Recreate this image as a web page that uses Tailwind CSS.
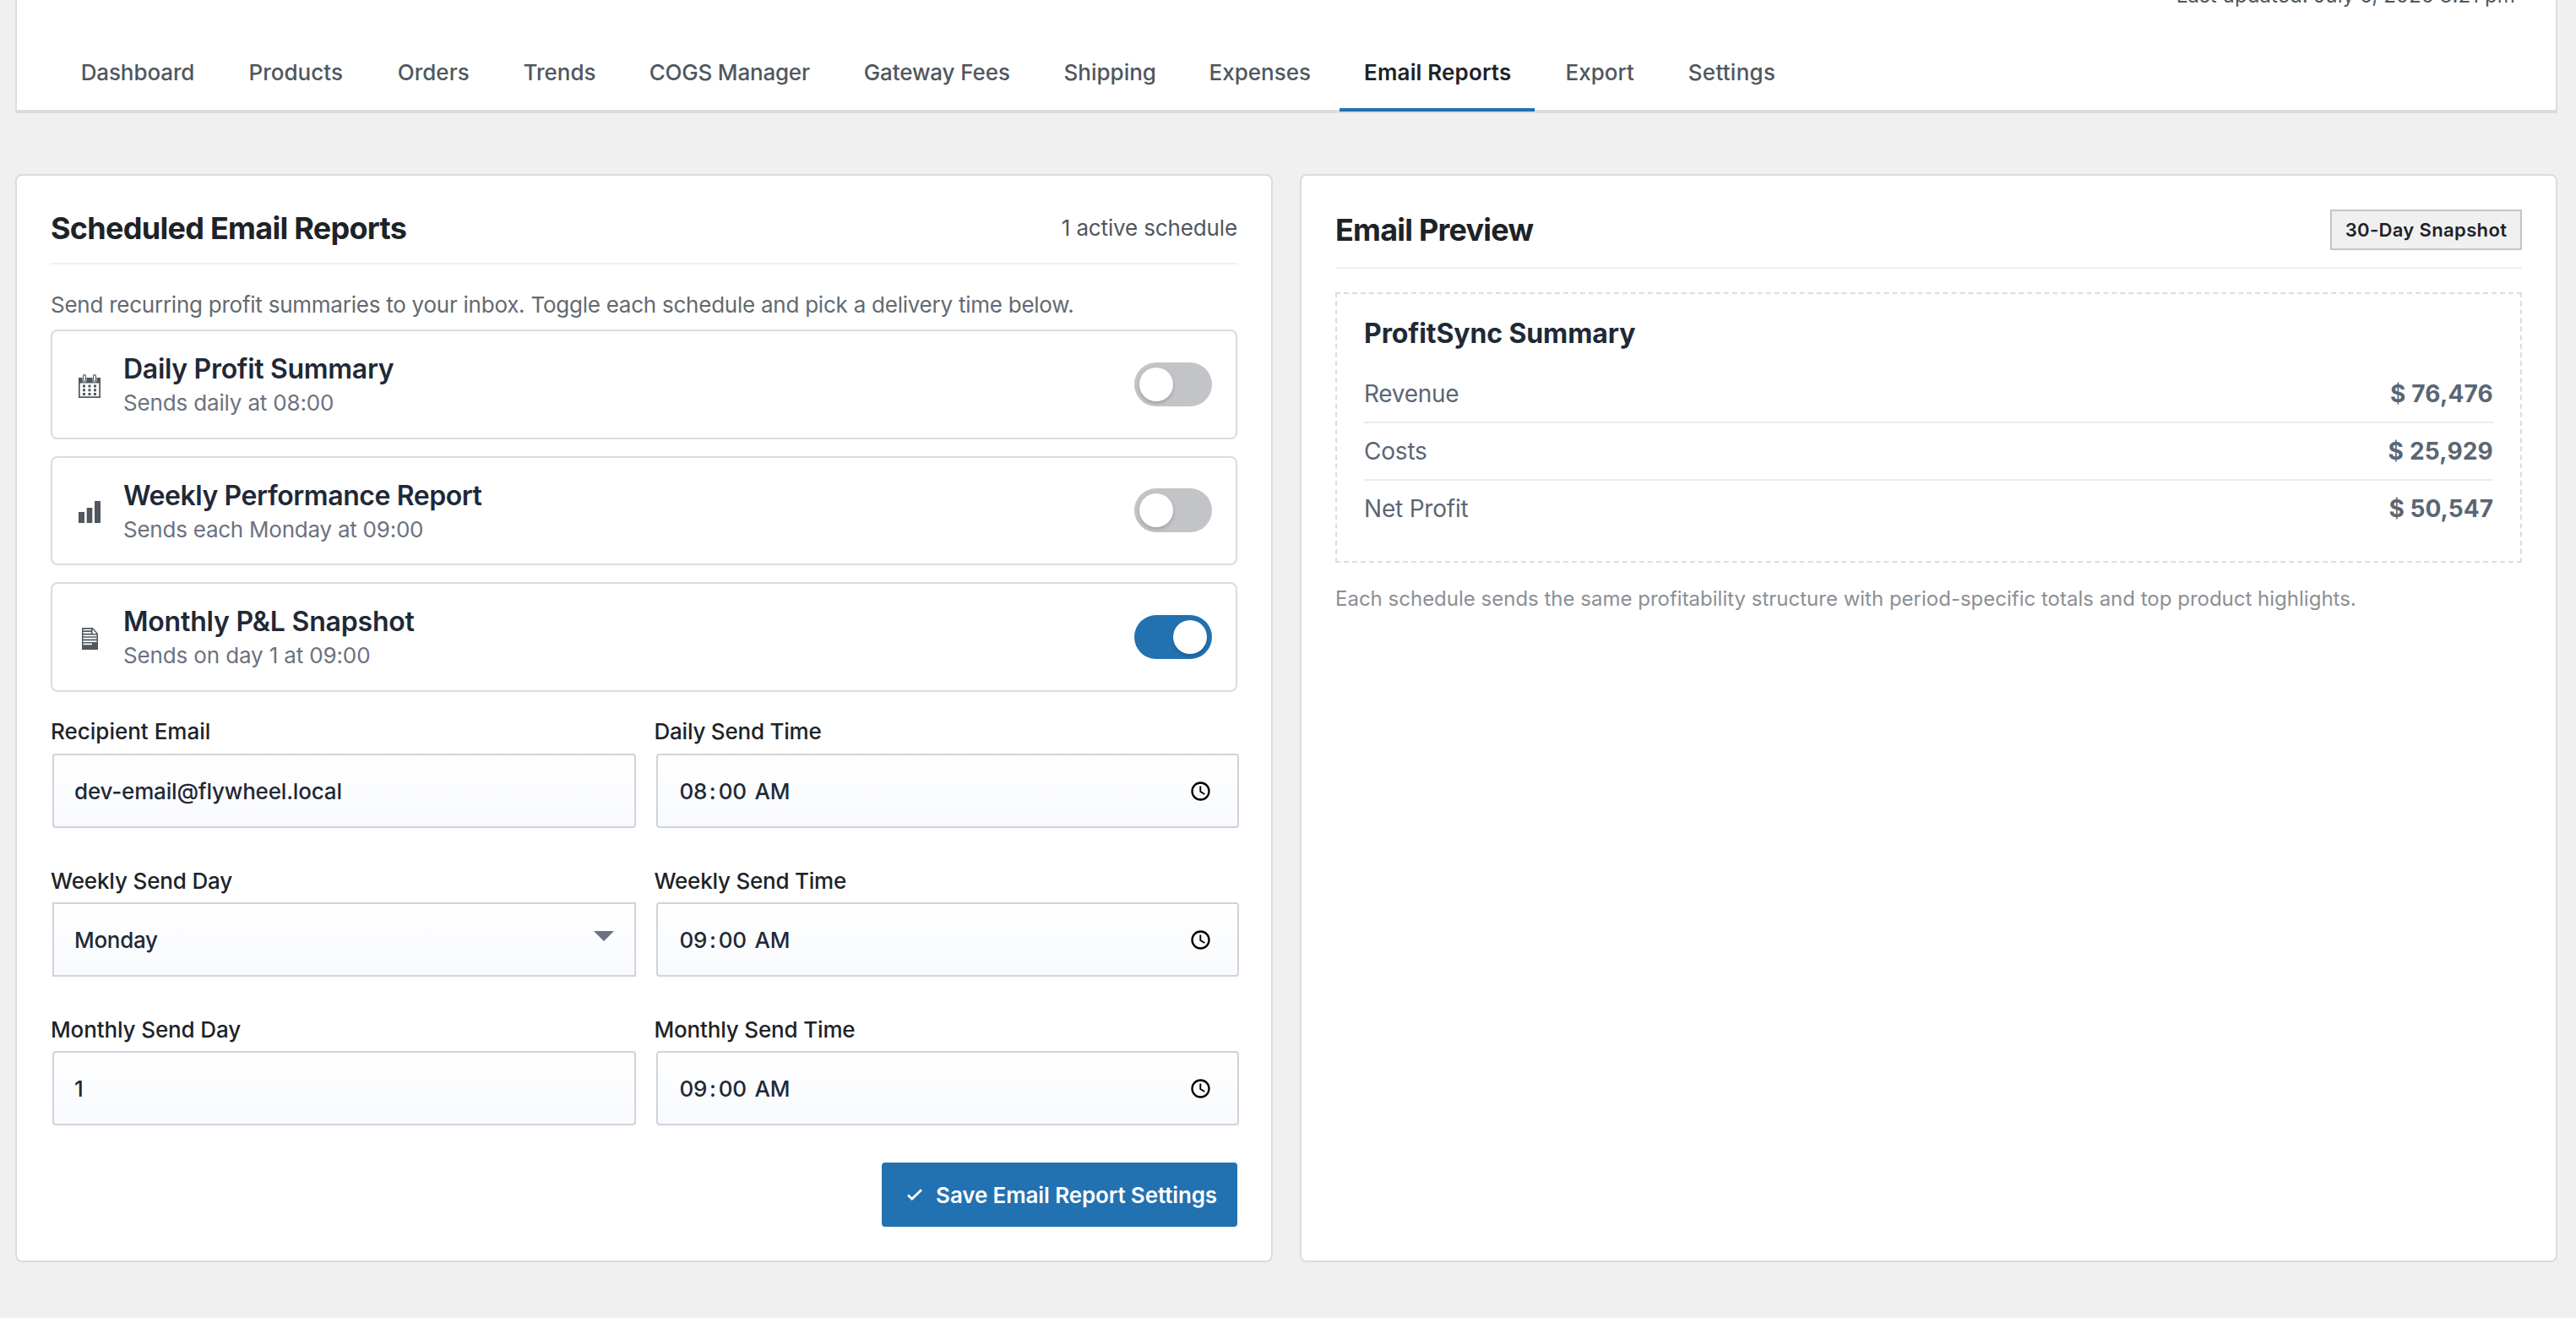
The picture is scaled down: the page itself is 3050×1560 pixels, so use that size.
<!DOCTYPE html>
<html lang="en">
<head>
<meta charset="utf-8">
<title>Email Reports</title>
<script src="https://cdn.jsdelivr.net/npm/@tailwindcss/browser@4"></script>
</head>
<body class="h-[1560px] w-[3050px] overflow-hidden bg-[#f0f0f0] px-0 font-['Inter',sans-serif] text-[26px] text-[#1d2327]">

<!-- Header with tabs -->
<header class="-mt-10 ml-[18px] h-[174px] w-[3010px] border-x-2 border-b-4 border-[#dcdcdc] bg-white pt-[17px]">
  <p class="pr-[48px] text-right text-2xl leading-9 tracking-[0.1px] text-[#50575e]">Last updated: July 6, 2026 3:21 pm</p>
  <nav class="mt-[30px] ml-[47px] flex gap-2 font-medium whitespace-nowrap text-[#50575e]">
    <a class="flex h-[89px] w-[190px] items-center justify-center border-b-4 border-transparent pl-[2px] tracking-[-0.1px]">Dashboard</a>
    <a class="flex h-[89px] w-[168.5px] items-center justify-center border-b-4 border-transparent pl-[2px]">Products</a>
    <a class="flex h-[89px] w-[142.5px] items-center justify-center border-b-4 border-transparent pl-px">Orders</a>
    <a class="flex h-[89px] w-[140px] items-center justify-center border-b-4 border-transparent pl-px">Trends</a>
    <a class="flex h-[89px] w-[245.5px] items-center justify-center border-b-4 border-transparent pl-[2px] tracking-[-0.2px]">COGS Manager</a>
    <a class="flex h-[89px] w-[229.5px] items-center justify-center border-b-4 border-transparent pl-[2px] tracking-[-0.1px]">Gateway Fees</a>
    <a class="flex h-[89px] w-[164.5px] items-center justify-center border-b-4 border-transparent pl-[2px]">Shipping</a>
    <a class="flex h-[89px] w-[174.5px] items-center justify-center border-b-4 border-transparent pl-[2px]">Expenses</a>
    <a class="relative z-10 flex h-[89px] w-[230.5px] items-center justify-center border-b-4 border-[#2271b1] pl-[2px] font-semibold tracking-[0.15px] text-[#1d2327]">Email Reports</a>
    <a class="flex h-[89px] w-[137.5px] items-center justify-center border-b-4 border-transparent pl-[2px]">Export</a>
    <a class="flex h-[89px] w-[158px] items-center justify-center border-b-4 border-transparent pl-[3px] tracking-[0.25px]">Settings</a>
  </nav>
</header>

<main class="mt-[72px] ml-[18px] grid h-[1288px] w-[3010px] grid-cols-2 gap-8">

  <!-- Schedules -->
  <section class="rounded-lg border-2 border-[#dcdcde] bg-white p-10">
    <div class="flex h-[65px] items-center justify-between border-b-2 border-[#f0f0f1] pb-5">
      <h2 class="text-4xl font-bold tracking-[-0.02em]">Scheduled Email Reports</h2>
      <span class="tracking-[-0.14px] text-[#50575e]">1 active schedule</span>
    </div>
    <p class="mt-7 leading-[39px] tracking-[-0.245px] text-[#646970]">Send recurring profit summaries to your inbox. Toggle each schedule and pick a delivery time below.</p>

    <div class="mt-[10px] flex flex-col gap-5">
      <div class="flex h-[129.5px] items-center rounded-lg border-2 border-[#dcdcde] px-7">
        <svg class="mt-1 size-8 shrink-0" viewBox="0 0 32 32" fill="#50575e">
          <path fill-rule="evenodd" d="M3 6h4.500v3a2.500 2.500 0 0 0 5 0V6h7v3a2.500 2.500 0 0 0 5 0V6H29v24H3zM4.700 12.500v15.800h22.600V12.500z"/>
          <path fill-rule="evenodd" d="M10 2a2 2 0 0 1 2 2v5a2 2 0 0 1-4 0V4a2 2 0 0 1 2-2zm0 1.200a.9.9 0 0 0-.9.9v4.800a.9.9 0 0 0 1.800 0V4.100a.9.9 0 0 0-.9-.9zM22 2a2 2 0 0 1 2 2v5a2 2 0 0 1-4 0V4a2 2 0 0 1 2-2zm0 1.200a.9.9 0 0 0-.9.9v4.800a.9.9 0 0 0 1.800 0V4.100a.9.9 0 0 0-.9-.9z"/>
          <path d="M8 14.500h3v3H8zM14.500 14.500h3v3h-3zM21 14.500h3v3h-3zM8 19.200h3v3H8zM14.500 19.200h3v3h-3zM21 19.200h3v3h-3zM8 24h3v3H8zM14.500 24h3v3h-3zM21 24h3v3h-3z"/>
        </svg>
        <div class="mt-[2px] ml-6">
          <h3 class="text-[32px] leading-[42px] font-semibold tracking-[-0.3px] text-[#1f2937]">Daily Profit Summary</h3>
          <p class="leading-[37px] tracking-[-0.16px] text-[#6b7280]">Sends daily at 08:00</p>
        </div>
        <div class="ml-auto flex h-[52px] w-[92px] items-center rounded-full bg-[#c3c4c7] px-1.5">
          <span class="size-10 rounded-full bg-white shadow-[0_2px_4px_rgba(0,0,0,0.2)]"></span>
        </div>
      </div>

      <div class="flex h-[129.5px] items-center rounded-lg border-2 border-[#dcdcde] px-7">
        <svg class="mt-1 size-8 shrink-0" viewBox="0 0 32 32" fill="#50575e">
          <path d="M3 16h7v13H3zM12.700 11h6.600v18h-6.600zM22 3h7v26h-7z"/>
        </svg>
        <div class="mt-[2px] ml-6">
          <h3 class="text-[32px] leading-[42px] font-semibold tracking-[-0.43px] text-[#1f2937]">Weekly Performance Report</h3>
          <p class="leading-[37px] tracking-[-0.24px] text-[#6b7280]">Sends each Monday at 09:00</p>
        </div>
        <div class="ml-auto flex h-[52px] w-[92px] items-center rounded-full bg-[#c3c4c7] px-1.5">
          <span class="size-10 rounded-full bg-white shadow-[0_2px_4px_rgba(0,0,0,0.2)]"></span>
        </div>
      </div>

      <div class="flex h-[129.5px] items-center rounded-lg border-2 border-[#dcdcde] px-7">
        <svg class="mt-1 size-8 shrink-0" viewBox="0 0 32 32">
          <path fill="#50575e" d="M7 3h13l6 7v19H7z"/>
          <path fill="#fff" d="M8.500 4.700h9.500v1.600H8.500zM8.500 8h9.500v1.800H8.500zM8.500 11.500h16v1.700h-16zM8.500 14.800h16v1.800h-16zM8.500 18.200h16v1.700h-16zM8.500 21.500h10.500v1.700H8.500zM19.600 4.800l4.600 5.200h-4.600z"/>
        </svg>
        <div class="mt-[2px] ml-6">
          <h3 class="text-[32px] leading-[42px] font-semibold tracking-[-0.2px] text-[#1f2937]">Monthly P&amp;L Snapshot</h3>
          <p class="leading-[37px] tracking-[-0.14px] text-[#6b7280]">Sends on day 1 at 09:00</p>
        </div>
        <div class="ml-auto flex h-[52px] w-[92px] items-center justify-end rounded-full bg-[#2271b1] px-1.5">
          <span class="size-10 rounded-full bg-white shadow-[0_2px_4px_rgba(0,0,0,0.2)]"></span>
        </div>
      </div>
    </div>

    <div class="mt-[27.5px] grid grid-cols-2 gap-x-6 gap-y-[42px] font-medium">
      <div>
        <div class="leading-[39px]">Recipient Email</div>
        <div class="mt-[7px] -mr-0.5 ml-0.5 flex h-[88px] items-center rounded-sm border-2 border-[#cfd3da] bg-linear-to-b from-white to-[#f8fafd] px-6 tracking-[-0.18px] text-[#1f2937]">dev-email@flywheel.local</div>
      </div>
      <div>
        <div class="leading-[39px] tracking-[-0.22px]">Daily Send Time</div>
        <div class="mt-[7px] -mr-0.5 ml-0.5 flex h-[88px] items-center rounded-sm border-2 border-[#cfd3da] bg-linear-to-b from-white to-[#f8fafd] pr-8 pl-6 text-[#1f2937]">
          <span class="px-0.5 tracking-[-0.4px]">08</span><span class="px-px">:</span><span class="px-0.5 tracking-[-0.4px]">00</span><span class="ml-[8px] tracking-[-0.3px]">AM</span>
          <svg class="ml-auto size-[23px]" viewBox="0 0 23 23" fill="none" stroke="#000" stroke-width="2.300"><circle cx="11.500" cy="11.500" r="10"/><path stroke-width="1.900" d="M11.300 5.500v6.500l5 3"/></svg>
        </div>
      </div>
      <div>
        <div class="mt-px -mb-px leading-[39px] tracking-[-0.14px]">Weekly Send Day</div>
        <div class="mt-[7px] -mr-0.5 ml-0.5 flex h-[88px] items-center justify-between border-2 border-[#cfd3da] bg-linear-to-b from-white to-[#f8fafd] px-6 tracking-[-0.3px] text-[#1f2937]">Monday
          <svg class="-mt-2 h-3 w-6" viewBox="0 0 24 12" fill="#6b7280"><path d="M0 0h24L12 12z"/></svg>
        </div>
      </div>
      <div>
        <div class="mt-px -mb-px leading-[39px] tracking-[-0.22px]">Weekly Send Time</div>
        <div class="mt-[7px] -mr-0.5 ml-0.5 flex h-[88px] items-center rounded-sm border-2 border-[#cfd3da] bg-linear-to-b from-white to-[#f8fafd] pr-8 pl-6 text-[#1f2937]">
          <span class="px-0.5 tracking-[-0.4px]">09</span><span class="px-px">:</span><span class="px-0.5 tracking-[-0.4px]">00</span><span class="ml-[8px] tracking-[-0.3px]">AM</span>
          <svg class="ml-auto size-[23px]" viewBox="0 0 23 23" fill="none" stroke="#000" stroke-width="2.300"><circle cx="11.500" cy="11.500" r="10"/><path stroke-width="1.900" d="M11.300 5.500v6.500l5 3"/></svg>
        </div>
      </div>
      <div>
        <div class="mt-px -mb-px leading-[39px] tracking-[-0.12px]">Monthly Send Day</div>
        <div class="mt-[7px] -mr-0.5 ml-0.5 flex h-[88px] items-center rounded-sm border-2 border-[#cfd3da] bg-linear-to-b from-white to-[#f8fafd] px-6 text-[#1f2937]">1</div>
      </div>
      <div>
        <div class="mt-px -mb-px leading-[39px] tracking-[-0.17px]">Monthly Send Time</div>
        <div class="mt-[7px] -mr-0.5 ml-0.5 flex h-[88px] items-center rounded-sm border-2 border-[#cfd3da] bg-linear-to-b from-white to-[#f8fafd] pr-8 pl-6 text-[#1f2937]">
          <span class="px-0.5 tracking-[-0.4px]">09</span><span class="px-px">:</span><span class="px-0.5 tracking-[-0.4px]">00</span><span class="ml-[8px] tracking-[-0.3px]">AM</span>
          <svg class="ml-auto size-[23px]" viewBox="0 0 23 23" fill="none" stroke="#000" stroke-width="2.300"><circle cx="11.500" cy="11.500" r="10"/><path stroke-width="1.900" d="M11.300 5.500v6.500l5 3"/></svg>
        </div>
      </div>
    </div>

    <div class="mt-11 flex justify-end">
      <button class="flex h-[76px] w-[421px] items-center justify-end rounded bg-[#2271b1] pr-6 font-semibold tracking-[-0.12px] whitespace-nowrap text-white">
        <svg class="mr-4 h-3.5 w-[18px]" viewBox="0 0 18 14" fill="none" stroke="#fff" stroke-width="2.800"><path d="M1 7.500l4.800 4.500L17 1.200"/></svg>
        Save Email Report Settings
      </button>
    </div>
  </section>

  <!-- Preview -->
  <section class="rounded-lg border-2 border-[#dcdcde] bg-white p-10">
    <div class="flex h-[70px] items-center justify-between border-b-2 border-[#f0f0f1] pb-5">
      <h2 class="text-4xl font-bold tracking-[-0.78px]">Email Preview</h2>
      <span class="flex h-12 w-[227px] items-center justify-center border-2 border-[#c3c4c7] bg-[#f0f0f1] text-[22px] font-semibold tracking-[0.36px]">30-Day Snapshot</span>
    </div>
    <div class="mt-7 h-80 border-2 border-dashed border-[#dcdcde] px-8 pt-7">
      <h3 class="mb-[19px] text-[32px] leading-[38px] font-bold tracking-[-0.1px] text-[#1f2937]">ProfitSync Summary</h3>
      <div class="text-[28px] leading-[42px] text-[#5b6673]">
        <div class="flex justify-between border-b-2 border-[#ececee] py-3"><span class="tracking-[-0.3px]">Revenue</span><strong class="tracking-[0.2px]">$ 76,476</strong></div>
        <div class="flex justify-between border-b-2 border-[#ececee] py-3"><span class="tracking-[-0.2px]">Costs</span><strong class="tracking-[0.2px]">$ 25,929</strong></div>
        <div class="flex justify-between pt-3"><span class="tracking-[-0.2px]">Net Profit</span><strong class="tracking-[0.05px]">$ 50,547</strong></div>
      </div>
    </div>
    <p class="mt-[25px] text-2xl leading-9 text-[#8c8f94]">Each schedule sends the same profitability structure with period-specific totals and top product highlights.</p>
  </section>
</main>
</body>
</html>
